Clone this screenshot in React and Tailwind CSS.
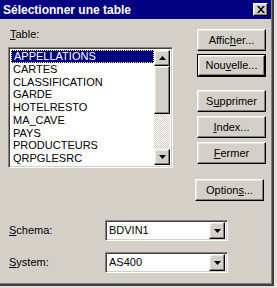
const raised =
    "border border-t-white border-l-white border-r-black border-b-black shadow-[inset_-1px_-1px_#808080,inset_1px_1px_#e8e6e1]";
const sunken =
    "border border-t-[#808080] border-l-[#808080] border-r-white border-b-white shadow-[inset_1px_1px_#404040,inset_-1px_-1px_#d4d0c8]";

const Mn = ({ children }) => <span className="underline underline-offset-[1px]">{children}</span>;

const Button = ({ children, isDefault, className = "" }) => {
    const inner = (
        <div className={`${raised} bg-[#d4d0c8] h-full w-full flex items-center justify-center`}>
            {children}
        </div>
    );
    if (isDefault) {
        return <div className={`border border-black h-[23px] w-[69px] ${className}`}>{inner}</div>;
    }
    return <div className={`h-[22px] w-[69px] ${className}`}>{inner}</div>;
};

const Arrow = ({ up }) => (
    <svg width="7" height="4" viewBox="0 0 7 4">
        {up ? <path d="M3.5 0 L7 4 L0 4 Z" fill="#000" /> : <path d="M0 0 L7 0 L3.5 4 Z" fill="#000" />}
    </svg>
);

const Combo = ({ value }) => (
    <div className={`${sunken} bg-white w-[123px] h-[21px] flex items-center p-[2px]`}>
        <span className="flex-1 pl-[1px]">{value}</span>
        <div className={`${raised} bg-[#d4d0c8] w-[16px] h-[17px] flex items-center justify-center`}>
            <Arrow />
        </div>
    </div>
);

const tables = [
    "APPELLATIONS",
    "CARTES",
    "CLASSIFICATION",
    "GARDE",
    "HOTELRESTO",
    "MA_CAVE",
    "PAYS",
    "PRODUCTEURS",
    "QRPGLESRC",
];

export default function App() {
    return (
        <div className="w-[277px] h-[288px] bg-[#e4e2dd] overflow-hidden font-['Liberation_Sans',Arial,sans-serif] text-[11px] text-black leading-none">
            <div className="w-[274px] h-[286px] bg-[#d4d0c8] border-r-2 border-b-2 border-r-[#404040] border-b-[#404040] shadow-[inset_-1px_-1px_#808080] flex flex-col">
                {/* Title bar */}
                <div className="h-[19px] w-[271px] bg-[#000080] flex items-center justify-between pl-[3px] pr-[2px]">
                    <span className="text-white font-bold text-[12px]">Sélectionner une table</span>
                    <div className={`${raised} bg-[#d4d0c8] w-[15px] h-[13px] flex items-center justify-center mr-[1px]`}>
                        <svg width="8" height="7" viewBox="0 0 8 7">
                            <path d="M0 0 L2 0 L4 2.5 L6 0 L8 0 L5 3.5 L8 7 L6 7 L4 4.5 L2 7 L0 7 L3 3.5 Z" fill="#000" />
                        </svg>
                    </div>
                </div>

                <div className="flex flex-col pl-[8px] pt-[10px]">
                    <div className="flex">
                        {/* Table list */}
                        <div className="flex flex-col w-[165px]">
                            <div className="pl-[2px] h-[18px]">
                                <Mn>T</Mn>able:
                            </div>
                            <div className={`${sunken} bg-white h-[121px] flex p-[2px]`}>
                                <div className="flex-1 flex flex-col">
                                    {tables.map((t, i) => (
                                        <div
                                            key={t}
                                            className={`h-[13px] flex items-center pl-[2px] ${
                                                i === 0
                                                    ? "bg-[#000080] text-white border border-dotted border-[#ffff66] pl-[1px]"
                                                    : ""
                                            }`}
                                        >
                                            {t}
                                        </div>
                                    ))}
                                </div>
                                <div className="w-[16px] flex flex-col bg-[repeating-conic-gradient(#ffffff_0%_25%,#d4d0c8_0%_50%)] bg-[length:2px_2px]">
                                    <div className={`${raised} bg-[#d4d0c8] h-[16px] flex items-center justify-center`}>
                                        <Arrow up />
                                    </div>
                                    <div className={`${raised} bg-[#d4d0c8] h-[48px]`} />
                                    <div className="flex-1" />
                                    <div className={`${raised} bg-[#d4d0c8] h-[16px] flex items-center justify-center`}>
                                        <Arrow />
                                    </div>
                                </div>
                            </div>
                        </div>

                        {/* Buttons */}
                        <div className="flex flex-col ml-[24px]">
                            <Button>
                                Affic<Mn>h</Mn>er...
                            </Button>
                            <Button isDefault className="mt-[3px]">
                                Nou<Mn>v</Mn>elle...
                            </Button>
                            <Button className="mt-[13px]">
                                S<Mn>u</Mn>pprimer
                            </Button>
                            <Button className="mt-[4px]">
                                <Mn>I</Mn>ndex...
                            </Button>
                            <Button className="mt-[4px]">
                                <Mn>F</Mn>ermer
                            </Button>
                        </div>
                    </div>

                    <div className="flex justify-end pr-[8px] mt-[11px]">
                        <Button>
                            Option<Mn>s</Mn>...
                        </Button>
                    </div>

                    <div className="flex items-center mt-[19px]">
                        <span className="w-[97px] pl-[1px]">
                            <Mn>S</Mn>chema:
                        </span>
                        <Combo value="BDVIN1" />
                    </div>
                    <div className="flex items-center mt-[11px]">
                        <span className="w-[97px] pl-[1px]">
                            <Mn>S</Mn>ystem:
                        </span>
                        <Combo value="AS400" />
                    </div>
                </div>
            </div>
        </div>
    );
}
